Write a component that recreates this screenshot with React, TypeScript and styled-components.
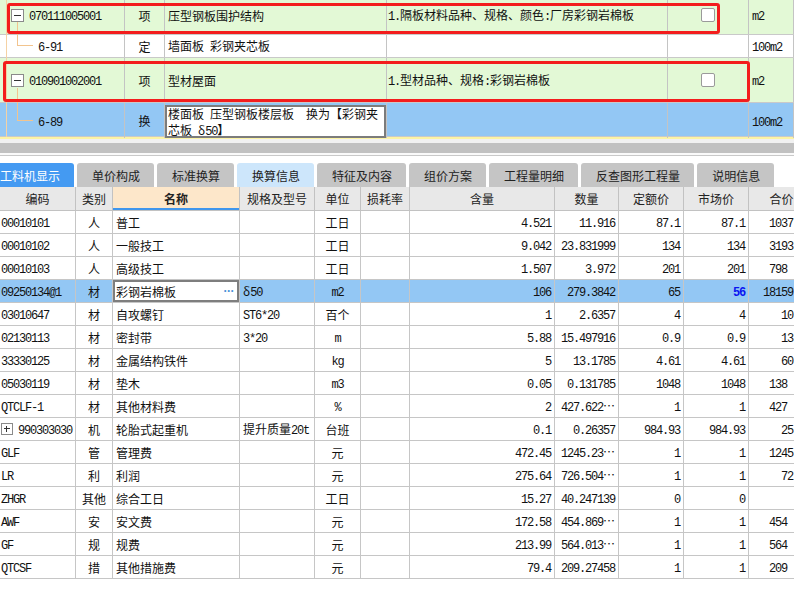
import React from "react";
import styled, { createGlobalStyle } from "styled-components";

const GlobalStyle = createGlobalStyle`
  * { box-sizing: border-box; }
  html, body { margin: 0; padding: 0; background: #fff; }
  body {
    font-family: "Noto Sans CJK SC", "Noto Sans", sans-serif;
    font-size: 12px;
    color: #111;
  }
`;

const Screen = styled.div`
  width: 794px;
  height: 603px;
  overflow: hidden;
  background: #fff;
  display: flex;
  flex-direction: column;
`;

// ascii runs use a fixed 6px pitch, like the grid's bitmap font
const Latin = styled.span`
  font-family: "Liberation Mono", "DejaVu Sans Mono", monospace;
  letter-spacing: -1.2px;
`;

const ASCII_RUN = /([\x20-\x7e\u00a0]+)/;

const Txt: React.FC<{ text: string }> = ({ text }) => (
  <span>
    {text
      .split(ASCII_RUN)
      .filter(Boolean)
      .map((part, i) =>
        /^[\x20-\x7e\u00a0]+$/.test(part) ? <Latin key={i}>{part}</Latin> : <React.Fragment key={i}>{part}</React.Fragment>
      )}
  </span>
);

/* ---------- upper pane (bill items) ---------- */

const TopPane = styled.div`
  position: relative;
  flex: none;
`;

const tones = {
  green: "#e3f9d6",
  white: "#ffffff",
  blue: "#93c7f4",
};

const TopRow = styled.div<{ $h: number; $tone: keyof typeof tones; $lift?: number }>`
  display: grid;
  grid-template-columns: 125px 40px 222px 281px 81px 1fr;
  height: ${(p) => p.$h}px;
  background: ${(p) => tones[p.$tone]};
  border-bottom: 1px solid #c9c9c9;
  & > * {
    padding-bottom: ${(p) => p.$lift ?? 0}px;
  }
`;

const TopCell = styled.div<{ $align?: "left" | "center"; $pad?: number }>`
  display: flex;
  align-items: center;
  justify-content: ${(p) => (p.$align === "center" ? "center" : "flex-start")};
  padding-left: ${(p) => (p.$align === "center" ? 0 : p.$pad ?? 3)}px;
  border-right: 1px solid #c4c4c4;
  white-space: nowrap;
  overflow: visible;
  min-width: 0;
`;

const CodeCell = styled(TopCell)<{ $level: number }>`
  position: relative;
  gap: 5px;
  padding-left: ${(p) => (p.$level ? 38 : 11)}px;
`;

const Elbow = styled.span<{ $reach: number }>`
  position: absolute;
  left: 17px;
  bottom: 50%;
  width: 16px;
  height: ${(p) => p.$reach}px;
  border-left: 1px solid #f2c48e;
  border-bottom: 1px solid #f2c48e;
`;

const Toggle = styled.span<{ $open: boolean; $size: number }>`
  position: relative;
  flex: none;
  width: ${(p) => p.$size}px;
  height: ${(p) => p.$size}px;
  border: 1px solid #8a8a8a;
  background: #fff;
  &::before {
    content: "";
    position: absolute;
    left: 2px;
    right: 2px;
    top: ${(p) => Math.floor((p.$size - 3) / 2)}px;
    height: 1px;
    background: #333;
  }
  &::after {
    content: "";
    display: ${(p) => (p.$open ? "none" : "block")};
    position: absolute;
    top: 2px;
    bottom: 2px;
    left: ${(p) => Math.floor((p.$size - 3) / 2)}px;
    width: 1px;
    background: #333;
  }
`;

const Check = styled.span`
  width: 14px;
  height: 14px;
  border: 1px solid #9a9a9a;
  border-radius: 2px;
  background: #fff;
`;

const EditCell = styled.div`
  border-right: 1px solid #c4c4c4;
  padding-top: 2px;
  position: relative;
`;

const TopEditor = styled.div`
  height: 33px;
  border: 2px solid #7c7c7c;
  background: #fff;
  padding: 0 2px 0 1px;
  line-height: 14px;
  overflow: hidden;
  word-break: break-all;
`;

const Rail = styled.span`
  position: absolute;
  left: 6px;
  top: 0;
  bottom: 0;
  width: 1px;
  background: #f5d2a4;
`;

const RedFrame = styled.span<{ $x: number; $y: number; $w: number; $h: number }>`
  position: absolute;
  left: ${(p) => p.$x}px;
  top: ${(p) => p.$y}px;
  width: ${(p) => p.$w}px;
  height: ${(p) => p.$h}px;
  border: 3px solid #f31d1d;
  border-radius: 3px;
  pointer-events: none;
`;

type BillRow = {
  code: string;
  level: 0 | 1;
  kind: string;
  name: string;
  desc?: string;
  check?: boolean;
  unit: string;
  h: number;
  lift?: number;
  tone: keyof typeof tones;
  reach?: number;
  editing?: boolean;
};

const billRows: BillRow[] = [
  { code: "070111005001", level: 0, kind: "项", name: "压型钢板围护结构", desc: "1.隔板材料品种、规格、颜色:厂房彩钢岩棉板", check: true, unit: "m2", h: 35, lift: 4, tone: "green" },
  { code: "6-91", level: 1, kind: "定", name: "墙面板 彩钢夹芯板", unit: "100m2", h: 23, tone: "white", reach: 24 },
  { code: "010901002001", level: 0, kind: "项", name: "型材屋面", desc: "1.型材品种、规格:彩钢岩棉板", check: true, unit: "m2", h: 45, tone: "green" },
  { code: "6-89", level: 1, kind: "换", name: "楼面板 压型钢板楼层板　换为【彩钢夹芯板 δ50】", unit: "100m2", h: 34, tone: "blue", reach: 33, editing: true },
];

/* ---------- splitter + tabs ---------- */

const Splitter = styled.div`
  flex: none;
  height: 20px;
  background: linear-gradient(
    to bottom,
    #fcf4a4 0 2px,
    #f1f1f1 2px 6px,
    #c1c1c1 6px 16px,
    #fafafa 16px 18px,
    #c9c9c9 18px 19px,
    #ffffff 19px
  );
`;

const TabBar = styled.div`
  flex: none;
  display: flex;
  gap: 3px;
  height: 24px;
  margin-top: 6px;
`;

const Tab = styled.div<{ $tone: "active" | "soft" | "plain" }>`
  flex: none;
  display: flex;
  align-items: center;
  padding: 0 14px 0 15px;
  border-radius: 3px 3px 0 0;
  white-space: nowrap;
  background: ${(p) => (p.$tone === "active" ? "#449af2" : p.$tone === "soft" ? "#cde6fb" : "#c5c5c5")};
  color: ${(p) => (p.$tone === "active" ? "#fff" : "#222")};
  &:first-child {
    margin-left: -15px;
  }
`;

const tabs: { label: string; tone: "active" | "soft" | "plain" }[] = [
  { label: "工料机显示", tone: "active" },
  { label: "单价构成", tone: "plain" },
  { label: "标准换算", tone: "plain" },
  { label: "换算信息", tone: "soft" },
  { label: "特征及内容", tone: "plain" },
  { label: "组价方案", tone: "plain" },
  { label: "工程量明细", tone: "plain" },
  { label: "反查图形工程量", tone: "plain" },
  { label: "说明信息", tone: "plain" },
];

/* ---------- lower grid (resources) ---------- */

const COLS = "76px 37px 127px 75px 46px 49px 145px 64px 65px 65px 66px";

const Grid = styled.div`
  flex: none;
  width: 815px;
`;

const GridRow = styled.div<{ $selected?: boolean }>`
  display: grid;
  grid-template-columns: ${COLS};
  height: 23px;
  border-bottom: 1px solid #c6c6c6;
  background: ${(p) => (p.$selected ? "#93c7f4" : "#fff")};
`;

const HeadRow = styled(GridRow)`
  height: 24px;
  background: #e8e8e8;
  border-bottom-color: #c2c2c2;
`;

const HeadCell = styled.div<{ $accent?: boolean }>`
  display: flex;
  align-items: center;
  justify-content: center;
  border-right: 1px solid #c2c2c2;
  color: #222;
  white-space: nowrap;
  overflow: hidden;
  background: ${(p) => (p.$accent ? "#fde7ca" : "transparent")};
  font-weight: ${(p) => (p.$accent ? 700 : 400)};
  box-shadow: ${(p) => (p.$accent ? "inset 0 -2px 0 #4096ec" : "none")};
`;

const Cell = styled.div<{ $align?: "left" | "center" | "right"; $pad?: number; $padR?: number; $hot?: boolean }>`
  display: flex;
  align-items: center;
  gap: 5px;
  min-width: 0;
  overflow: hidden;
  white-space: nowrap;
  justify-content: ${(p) => (p.$align === "center" ? "center" : p.$align === "right" ? "flex-end" : "flex-start")};
  padding-left: ${(p) => (p.$align === "left" || !p.$align ? p.$pad ?? 3 : 0)}px;
  padding-right: ${(p) => (p.$align === "right" ? p.$padR ?? 3 : 0)}px;
  border-right: 1px solid #c6c6c6;
  color: ${(p) => (p.$hot ? "#0a14f0" : "#111")};
  font-weight: ${(p) => (p.$hot ? 700 : 400)};
`;

const CellEditor = styled.div`
  flex: 1;
  align-self: stretch;
  display: flex;
  align-items: center;
  border: 2px solid #7e7e7e;
  background: #fff;
  padding-left: 1px;
`;

const Dots = styled.span`
  margin-left: auto;
  margin-right: 3px;
  color: #4a92d8;
  font-family: "Liberation Sans", sans-serif;
  font-weight: 700;
  letter-spacing: -0.5px;
`;

type Resource = {
  code: string;
  kind: string;
  name: string;
  spec?: string;
  unit: string;
  content: string;
  qty: string;
  base: string;
  market: string;
  total: string;
  expand?: boolean;
  selected?: boolean;
};

// 合价 runs past the window edge; only the part that shows is kept
const resources: Resource[] = [
  { code: "00010101", kind: "人", name: "普工", unit: "工日", content: "4.521", qty: "11.916", base: "87.1", market: "87.1", total: "1037" },
  { code: "00010102", kind: "人", name: "一般技工", unit: "工日", content: "9.042", qty: "23.831999", base: "134", market: "134", total: "3193" },
  { code: "00010103", kind: "人", name: "高级技工", unit: "工日", content: "1.507", qty: "3.972", base: "201", market: "201", total: "798\u00a0" },
  { code: "09250134@1", kind: "材", name: "彩钢岩棉板", spec: "δ50", unit: "m2", content: "106", qty: "279.3842", base: "65", market: "56", total: "18159", selected: true },
  { code: "03010647", kind: "材", name: "自攻螺钉", spec: "ST6*20", unit: "百个", content: "1", qty: "2.6357", base: "4", market: "4", total: "10" },
  { code: "02130113", kind: "材", name: "密封带", spec: "3*20", unit: "m", content: "5.88", qty: "15.497916", base: "0.9", market: "0.9", total: "13" },
  { code: "33330125", kind: "材", name: "金属结构铁件", unit: "kg", content: "5", qty: "13.1785", base: "4.61", market: "4.61", total: "60" },
  { code: "05030119", kind: "材", name: "垫木", unit: "m3", content: "0.05", qty: "0.131785", base: "1048", market: "1048", total: "138\u00a0" },
  { code: "QTCLF-1", kind: "材", name: "其他材料费", unit: "%", content: "2", qty: "427.622…", base: "1", market: "1", total: "427\u00a0" },
  { code: "990303030", kind: "机", name: "轮胎式起重机", spec: "提升质量20t", unit: "台班", content: "0.1", qty: "0.26357", base: "984.93", market: "984.93", total: "25", expand: true },
  { code: "GLF", kind: "管", name: "管理费", unit: "元", content: "472.45", qty: "1245.23…", base: "1", market: "1", total: "1245" },
  { code: "LR", kind: "利", name: "利润", unit: "元", content: "275.64", qty: "726.504…", base: "1", market: "1", total: "72" },
  { code: "ZHGR", kind: "其他", name: "综合工日", unit: "工日", content: "15.27", qty: "40.247139", base: "0", market: "0", total: "" },
  { code: "AWF", kind: "安", name: "安文费", unit: "元", content: "172.58", qty: "454.869…", base: "1", market: "1", total: "454\u00a0" },
  { code: "GF", kind: "规", name: "规费", unit: "元", content: "213.99", qty: "564.013…", base: "1", market: "1", total: "564\u00a0" },
  { code: "QTCSF", kind: "措", name: "其他措施费", unit: "元", content: "79.4", qty: "209.27458", base: "1", market: "1", total: "209\u00a0" },
];

const headers = ["编码", "类别", "名称", "规格及型号", "单位", "损耗率", "含量", "数量", "定额价", "市场价", "合价"];

const App: React.FC = () => {
  return (
    <Screen>
      <GlobalStyle />

      <TopPane>
        {billRows.map((r) => (
          <TopRow key={r.code} $h={r.h} $tone={r.tone} $lift={r.lift}>
            <CodeCell $level={r.level}>
              {r.level === 0 ? <Toggle $open $size={13} /> : <Elbow $reach={r.reach ?? 20} />}
              <Txt text={r.code} />
            </CodeCell>
            <TopCell $align="center">{r.kind}</TopCell>
            {r.editing ? (
              <EditCell>
                <TopEditor>
                  <Txt text={r.name} />
                </TopEditor>
              </EditCell>
            ) : (
              <TopCell>
                <Txt text={r.name} />
              </TopCell>
            )}
            <TopCell $pad={1}>{r.desc && <Txt text={r.desc} />}</TopCell>
            <TopCell $align="center">{r.check && <Check />}</TopCell>
            <TopCell>
              <Txt text={r.unit} />
            </TopCell>
          </TopRow>
        ))}
        <Rail />
        <RedFrame $x={7} $y={3} $w={713} $h={31} />
        <RedFrame $x={3} $y={61} $w={747} $h={41} />
      </TopPane>

      <Splitter />

      <TabBar>
        {tabs.map((t) => (
          <Tab key={t.label} $tone={t.tone}>
            {t.label}
          </Tab>
        ))}
      </TabBar>

      <Grid>
        <HeadRow>
          {headers.map((h) => (
            <HeadCell key={h} $accent={h === "名称"}>
              {h}
            </HeadCell>
          ))}
        </HeadRow>
        {resources.map((r) => (
          <GridRow key={r.code} $selected={r.selected}>
            <Cell $pad={1}>
              {r.expand && <Toggle $open={false} $size={12} />}
              <Txt text={r.code} />
            </Cell>
            <Cell $align="center">{r.kind}</Cell>
            {r.selected ? (
              <Cell $pad={0}>
                <CellEditor>
                  <Txt text={r.name} />
                  <Dots>···</Dots>
                </CellEditor>
              </Cell>
            ) : (
              <Cell>
                <Txt text={r.name} />
              </Cell>
            )}
            <Cell>{r.spec && <Txt text={r.spec} />}</Cell>
            <Cell $align="center">
              <Txt text={r.unit} />
            </Cell>
            <Cell />
            <Cell $align="right">
              <Txt text={r.content} />
            </Cell>
            <Cell $align="right">
              <Txt text={r.qty} />
            </Cell>
            <Cell $align="right">
              <Txt text={r.base} />
            </Cell>
            <Cell $align="right" $hot={r.selected}>
              <Txt text={r.market} />
            </Cell>
            <Cell $align="right" $padR={21}>
              <Txt text={r.total} />
            </Cell>
          </GridRow>
        ))}
      </Grid>
    </Screen>
  );
};

export default App;
